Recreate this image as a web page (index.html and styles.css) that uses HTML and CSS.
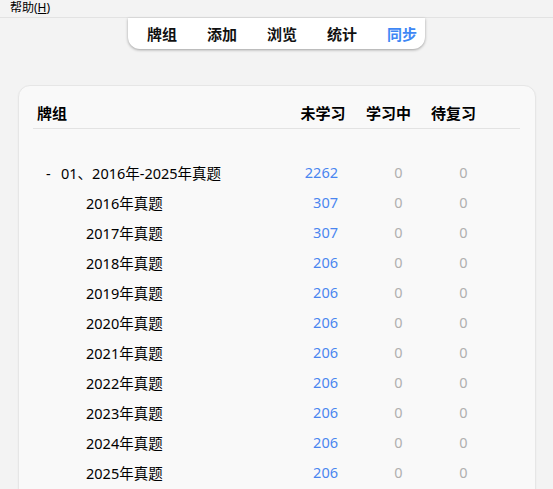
FILE: index.html
```html
<!DOCTYPE html>
<html>
<head>
  <meta charset="UTF-8">
  <title>牌组</title>
  <link rel="stylesheet" href="styles.css">
</head>
<body>

  <div class="menubar">
    <span class="menu-item">帮助(<u>H</u>)</span>
  </div>

  <div class="toolbar-wrap">
    <div class="toolbar">
      <a class="tab">牌组</a>
      <a class="tab">添加</a>
      <a class="tab">浏览</a>
      <a class="tab">统计</a>
      <a class="tab sync">同步</a>
    </div>
  </div>

  <!-- deck list -->
  <div class="deck-card">
    <div class="deck-row head">
      <div class="name">牌组</div>
      <div class="col">未学习</div>
      <div class="col">学习中</div>
      <div class="col">待复习</div>
    </div>

    <div class="deck-list">
      <div class="deck-row">
        <div class="name top"><span class="collapse">-</span>01、2016年-2025年真题</div>
        <div class="new">2262</div>
        <div class="zero">0</div>
        <div class="zero">0</div>
      </div>
      <div class="deck-row">
        <div class="name sub">2016年真题</div>
        <div class="new">307</div>
        <div class="zero">0</div>
        <div class="zero">0</div>
      </div>
      <div class="deck-row">
        <div class="name sub">2017年真题</div>
        <div class="new">307</div>
        <div class="zero">0</div>
        <div class="zero">0</div>
      </div>
      <div class="deck-row">
        <div class="name sub">2018年真题</div>
        <div class="new">206</div>
        <div class="zero">0</div>
        <div class="zero">0</div>
      </div>
      <div class="deck-row">
        <div class="name sub">2019年真题</div>
        <div class="new">206</div>
        <div class="zero">0</div>
        <div class="zero">0</div>
      </div>
      <div class="deck-row">
        <div class="name sub">2020年真题</div>
        <div class="new">206</div>
        <div class="zero">0</div>
        <div class="zero">0</div>
      </div>
      <div class="deck-row">
        <div class="name sub">2021年真题</div>
        <div class="new">206</div>
        <div class="zero">0</div>
        <div class="zero">0</div>
      </div>
      <div class="deck-row">
        <div class="name sub">2022年真题</div>
        <div class="new">206</div>
        <div class="zero">0</div>
        <div class="zero">0</div>
      </div>
      <div class="deck-row">
        <div class="name sub">2023年真题</div>
        <div class="new">206</div>
        <div class="zero">0</div>
        <div class="zero">0</div>
      </div>
      <div class="deck-row">
        <div class="name sub">2024年真题</div>
        <div class="new">206</div>
        <div class="zero">0</div>
        <div class="zero">0</div>
      </div>
      <div class="deck-row">
        <div class="name sub">2025年真题</div>
        <div class="new">206</div>
        <div class="zero">0</div>
        <div class="zero">0</div>
      </div>
    </div>
  </div>

</body>
</html>
```

FILE: styles.css
```css
html, body {
  height: 100%;
  overflow: hidden;
}
body {
  margin: 0;
  background: #f3f3f3;
  font-family: "Noto Sans", "Noto Sans CJK SC", sans-serif;
  color: #000;
}

.menubar {
  height: 17px;
  border-bottom: 1px solid #e2e2e2;
  font-size: 12px;
  line-height: 16px;
  padding-left: 10px;
}
.menu-item u { text-underline-offset: 1px; }

.toolbar-wrap {
  display: flex;
  justify-content: center;
}
.toolbar {
  display: flex;
  gap: 30px;
  height: 31px;
  align-items: center;
  padding: 0 8px 0 19px;
  background: #fff;
  border-radius: 0 0 12px 12px;
  box-shadow: 0 1px 3px rgba(0, 0, 0, 0.35);
}
.tab {
  font-size: 15px;
  font-weight: 600;
  color: #111;
  width: 30px;
  white-space: nowrap;
}
.tab.sync { color: #3e87f5; }

.deck-card {
  margin: 36px 17px 0 18px;
  background: #f9f9f9;
  border: 1px solid #e6e6e6;
  border-radius: 12px;
  box-shadow: 0 1px 2px rgba(0, 0, 0, 0.06);
  padding: 17px 15px 0 14px;
  height: 600px;
}

.deck-row {
  display: grid;
  grid-template-columns: 1fr 66px 65px 65px 34px;
  height: 30px;
  align-items: center;
  font-size: 14.5px;
}
.deck-row.head {
  height: 25px;
  align-items: start;
  border-bottom: 1px solid #e3e3e3;
  font-size: 15px;
  font-weight: 600;
  line-height: 20px;
}
.head .name { padding-left: 4px; }
.head .col { text-align: center; }

.deck-list { padding-top: 28px; }

.name.top { padding-left: 13px; }
.collapse { display: inline-block; width: 15px; }
.name.sub { padding-left: 53px; }

.new {
  color: #4a86f0;
  text-align: right;
  padding-right: 18px;
}
.zero {
  color: #b0b0b0;
  text-align: center;
  padding-left: 20px;
}
```
